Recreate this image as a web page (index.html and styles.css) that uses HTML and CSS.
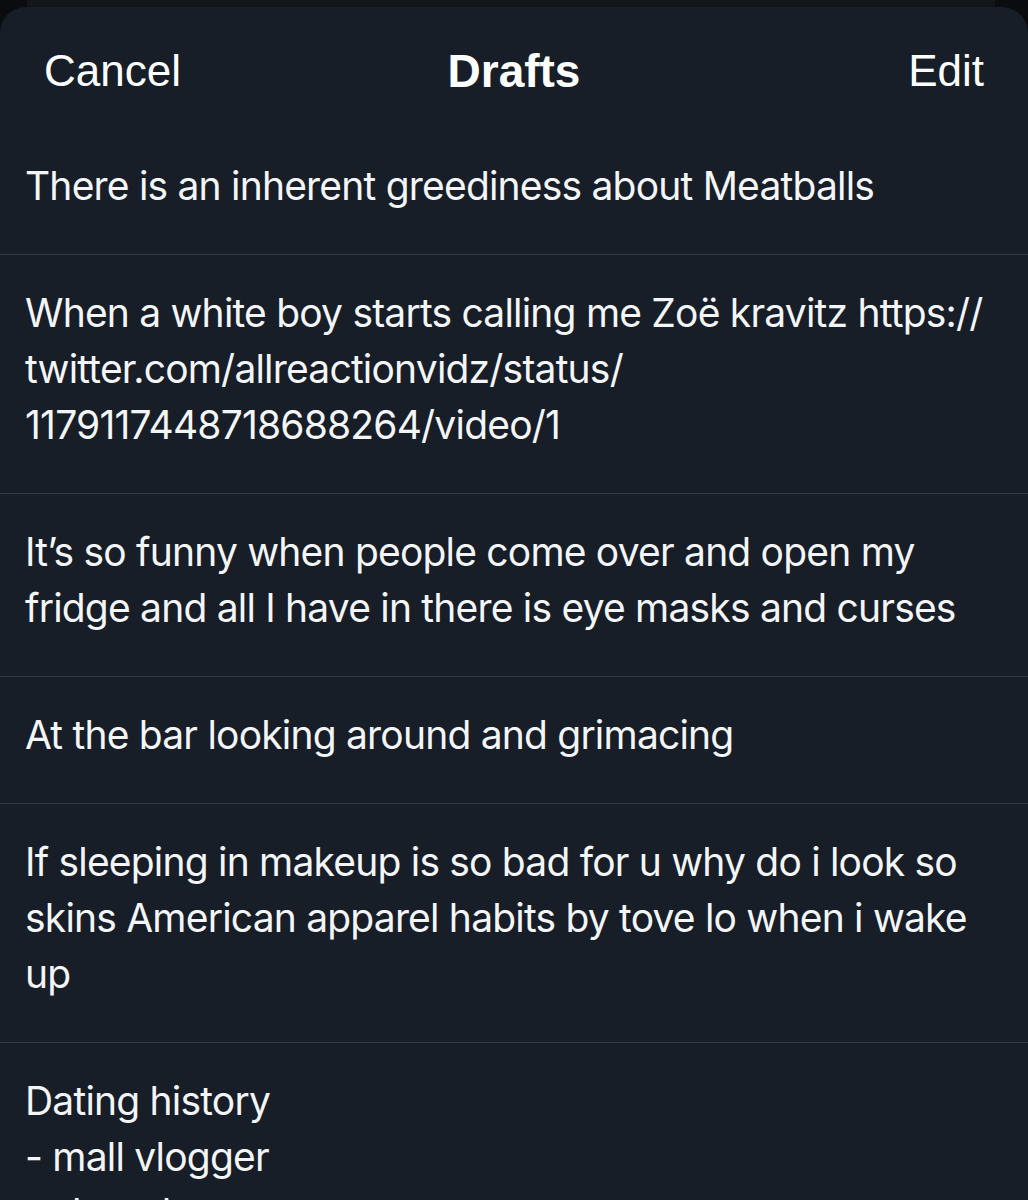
FILE: index.html
```html
<!DOCTYPE html>
<html lang="en">
<head>
  <meta charset="UTF-8" />
  <meta name="viewport" content="width=device-width, initial-scale=1.0"/>
  <title>Drafts</title>
  <link rel="stylesheet" href="styles.css">
</head>

<body>

  <!-- card peeking out behind the sheet -->
  <div class="behind">
    <div class="behind-card"></div>
  </div>

  <div class="sheet">
    <header class="sheet-header">
      <a href="#" class="header-btn">Cancel</a>
      <h1>Drafts</h1>
      <a href="#" class="header-btn edit">Edit</a>
    </header>

    <ul class="drafts">
      <li>There is an inherent greediness about Meatballs</li>
      <li>When a white boy starts calling me Zoë kravitz https://<br>twitter.com/allreactionvidz/status/<br>1179117448718688264/video/1</li>
      <li>It’s so funny when people come over and open my<br>fridge and all I have in there is eye masks and curses</li>
      <li>At the bar looking around and grimacing</li>
      <li>If sleeping in makeup is so bad for u why do i look so<br>skins American apparel habits by tove lo when i wake<br>up</li>
      <li>Dating history<br>- mall vlogger<br>- skaterboy</li>
    </ul>
  </div>

</body>
</html>
```

FILE: styles.css
```css
body {
  margin: 0;
  padding: 0;
  background-color: #0a0c0f;
  color: #f4f5f6;
  font-family: Inter, 'Noto Sans', sans-serif;
  height: 1200px;
  overflow: hidden;
}

.behind {
  height: 7px;
  padding: 0 33px 0 27px;
}

.behind-card {
  height: 100%;
  background-color: #121519;
}

.sheet {
  background-color: #171e28;
  border-radius: 26px 26px 0 0;
}

.sheet-header {
  display: flex;
  align-items: center;
  justify-content: space-between;
  height: 121px;
  padding: 6px 44px 0;
  box-sizing: border-box;
  font-family: 'Liberation Sans', Arial, sans-serif;
}

.header-btn {
  color: #ffffff;
  text-decoration: none;
  font-size: 44px;
  width: 160px;
}

.header-btn.edit {
  text-align: right;
}

.sheet-header h1 {
  margin: 0;
  font-size: 46px;
  font-weight: bold;
  color: #ffffff;
}

.drafts {
  list-style: none;
  margin: 0;
  padding: 0;
}

.drafts li {
  padding: 30px 24px 40px 25px;
  border-bottom: 1px solid #343b46;
  font-size: 39px;
  line-height: 56px;
  white-space: nowrap;
  letter-spacing: -0.8px;
}
```
